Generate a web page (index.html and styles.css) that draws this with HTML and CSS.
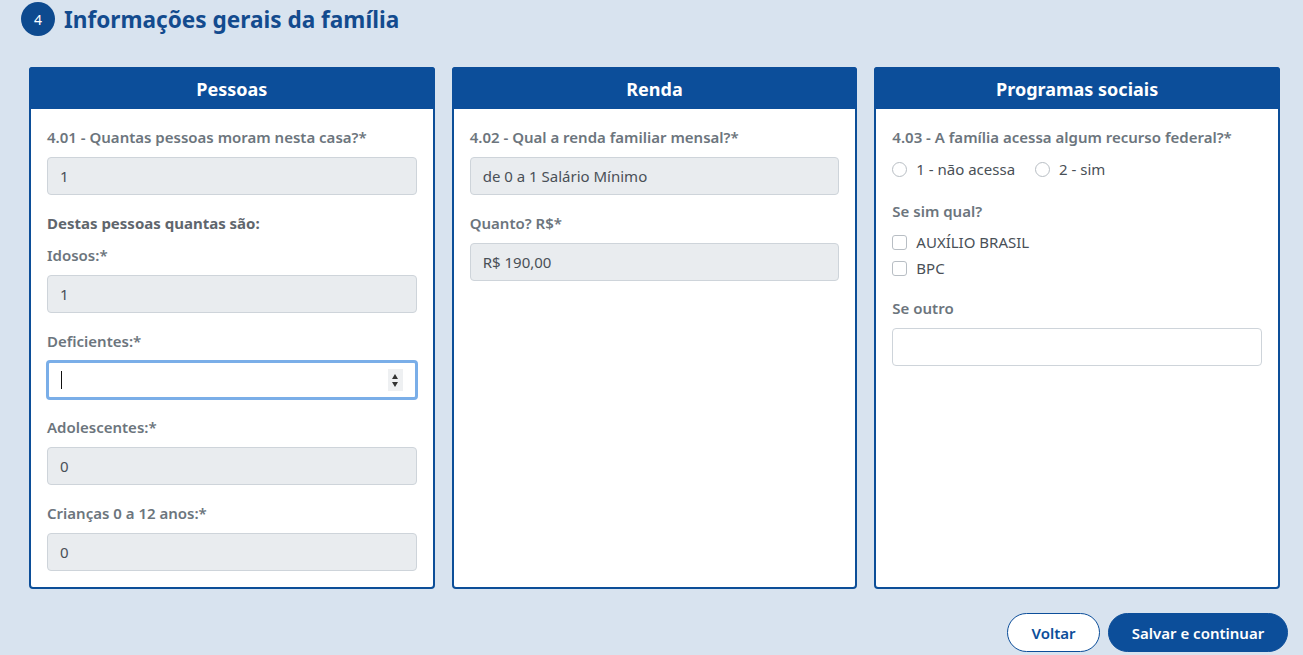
FILE: index.html
```html
<!DOCTYPE html>
<html lang="pt-BR">
<head>
<meta charset="utf-8">
<title>Informações gerais da família</title>
<link rel="stylesheet" href="styles.css">
</head>
<body>
<div class="page">
  <div class="section-title">
    <span class="step">4</span>
    <h2>Informações gerais da família</h2>
  </div>

  <div class="cards">
    <div class="card">
      <div class="card-head">Pessoas</div>
      <div class="card-body">
        <label class="lbl">4.01 - Quantas pessoas moram nesta casa?*</label>
        <div class="field disabled">1</div>
        <div class="lbl strong">Destas pessoas quantas são:</div>
        <label class="lbl">Idosos:*</label>
        <div class="field disabled">1</div>
        <label class="lbl">Deficientes:*</label>
        <div class="field focus"><span class="caret"></span><span class="spin"><span class="up"></span><span class="down"></span></span></div>
        <label class="lbl">Adolescentes:*</label>
        <div class="field disabled">0</div>
        <label class="lbl">Crianças 0 a 12 anos:*</label>
        <div class="field disabled last">0</div>
      </div>
    </div>

    <div class="card">
      <div class="card-head">Renda</div>
      <div class="card-body">
        <label class="lbl">4.02 - Qual a renda familiar mensal?*</label>
        <div class="field disabled">de 0 a 1 Salário Mínimo</div>
        <label class="lbl">Quanto? R$*</label>
        <div class="field disabled">R$ 190,00</div>
      </div>
    </div>

    <div class="card">
      <div class="card-head">Programas sociais</div>
      <div class="card-body">
        <label class="lbl">4.03 - A família acessa algum recurso federal?*</label>
        <div class="radios">
          <span class="opt"><span class="radio"></span>1 - não acessa</span>
          <span class="opt"><span class="radio"></span>2 - sim</span>
        </div>
        <label class="lbl">Se sim qual?</label>
        <div class="checks">
          <span class="opt"><span class="check"></span>AUXÍLIO BRASIL</span>
          <span class="opt"><span class="check"></span>BPC</span>
        </div>
        <label class="lbl">Se outro</label>
        <div class="field"></div>
      </div>
    </div>
  </div>

  <div class="actions">
    <button class="btn btn-outline">Voltar</button>
    <button class="btn btn-primary">Salvar e continuar</button>
  </div>
</div>
</body>
</html>
```

FILE: styles.css
```css
* { box-sizing: border-box; }
html, body { margin: 0; padding: 0; }
body {
  background: #d8e3ef;
  font-family: "Noto Sans", "Open Sans", sans-serif;
  color: #495057;
  width: 1303px;
  height: 655px;
  overflow: hidden;
}
.page { padding: 2px 15px 0 21px; }

.section-title {
  display: flex;
  align-items: center;
  gap: 9px;
  height: 34px;
}
.step {
  width: 34px;
  height: 34px;
  border-radius: 50%;
  background: #0d4a8f;
  color: #fff;
  font-size: 14px;
  display: flex;
  align-items: center;
  justify-content: center;
}
.section-title h2 {
  margin: 0;
  font-size: 22.6px;
  font-weight: 700;
  color: #134b8e;
}

.cards {
  display: grid;
  grid-template-columns: repeat(3, 1fr);
  column-gap: 17px;
  margin: 31px 0 0 8px;
  width: 1251px;
}
.card {
  background: #fff;
  border: 2px solid #0c4e98;
  border-radius: 4px;
  height: 522px;
  display: flex;
  flex-direction: column;
}
.card-head {
  background: #0c4e9a;
  color: #fff;
  text-align: center;
  font-weight: 700;
  font-size: 18px;
  height: 42px;
  line-height: 44px;
  margin: -2px -2px 0 -2px;
  border-radius: 3px 3px 0 0;
}
.card-body {
  padding: 17px 16px 0 16px;
  display: flex;
  flex-direction: column;
}
.lbl {
  display: block;
  font-size: 15px;
  font-weight: 600;
  color: #6c757d;
  line-height: 22px;
  margin-bottom: 9px;
}
.lbl.strong { font-weight: 700; color: #5f666d; margin-bottom: 10px; }

.field {
  height: 38px;
  border: 1px solid #ced4da;
  border-radius: 4px;
  background: #fff;
  font-size: 15px;
  line-height: 36px;
  padding: 0 12px;
  color: #495057;
  margin-bottom: 17px;
  position: relative;
}
.field.disabled { background: #e9ecef; }
.field.last { margin-bottom: 0; }
.field.focus {
  border: 3px solid #7aaee8;
  height: 40px;
  margin: -1px -1px 16px -1px;
  padding: 0 12px;
}
.caret {
  position: absolute;
  left: 12px;
  top: 8px;
  width: 1px;
  height: 18px;
  background: #111;
}
.spin {
  position: absolute;
  right: 12px;
  top: 6px;
  width: 15px;
  height: 22px;
  background: #eef0f2;
  display: flex;
  flex-direction: column;
  align-items: center;
  justify-content: center;
  gap: 3px;
}
.spin .up, .spin .down {
  width: 0; height: 0;
  border-left: 3.5px solid transparent;
  border-right: 3.5px solid transparent;
}
.spin .up { border-bottom: 5px solid #333; }
.spin .down { border-top: 5px solid #333; }

.radios {
  display: flex;
  gap: 20px;
  font-size: 15px;
  color: #495057;
  margin: 1px 0 20px 0;
  line-height: 22px;
}
.opt { display: flex; align-items: center; gap: 9px; }
.radio {
  width: 15px; height: 15px;
  border: 1px solid #b8bec4;
  border-radius: 50%;
  background: #fff;
}
.checks {
  display: flex;
  flex-direction: column;
  gap: 4px;
  font-size: 15px;
  color: #495057;
  line-height: 22px;
  margin-bottom: 18px;
}
.check {
  width: 15px; height: 15px;
  border: 1px solid #b8bec4;
  border-radius: 3px;
  background: #fff;
}

.actions {
  display: flex;
  justify-content: flex-end;
  gap: 8px;
  margin-top: 24px;
}
.btn {
  height: 39px;
  border-radius: 20px;
  font-family: "Noto Sans", "Open Sans", sans-serif;
  font-size: 15px;
  font-weight: 600;
  cursor: pointer;
}
.btn-outline {
  width: 93px;
  background: #fff;
  color: #0c4e9a;
  border: 1px solid #0c4e9a;
}
.btn-primary {
  width: 180px;
  background: #0c4e9a;
  color: #fff;
  border: 1px solid #0c4e9a;
}
```
